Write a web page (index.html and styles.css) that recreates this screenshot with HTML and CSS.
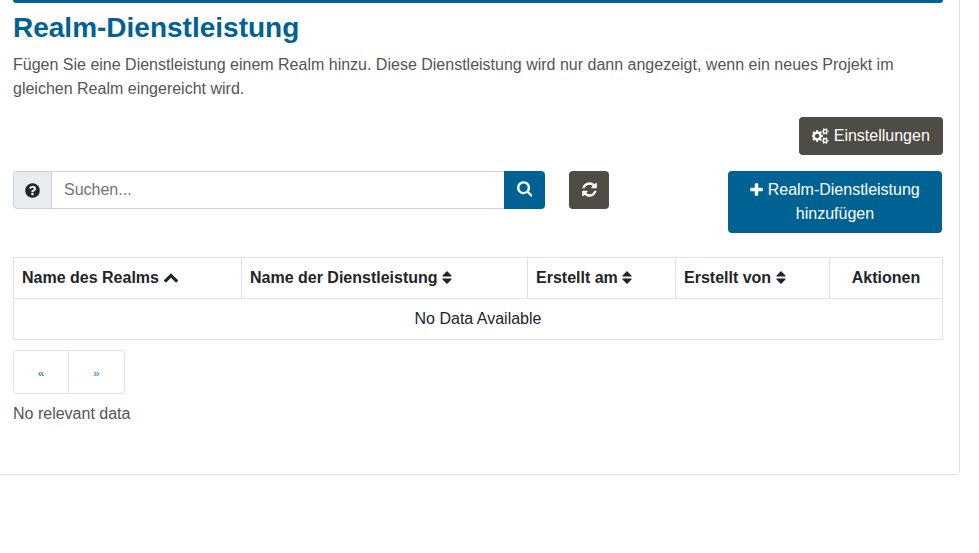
FILE: index.html
```html
<!DOCTYPE html>
<html lang="de">
<head>
<meta charset="utf-8">
<title>Realm-Dienstleistung</title>
<link rel="stylesheet" href="styles.css">
</head>
<body>
<main class="card">
  <div class="topbar"></div>
  <h1>Realm-Dienstleistung</h1>
  <p class="intro">Fügen Sie eine Dienstleistung einem Realm hinzu. Diese Dienstleistung wird nur dann angezeigt, wenn ein neues Projekt im gleichen Realm eingereicht wird.</p>
  <div class="settings">
    <button class="btn dark"><svg class="icon cogs" viewBox="0 0 1920 1792"><path d="M832 896q0-106-75-181t-181-75-181 75-75 181 75 181 181 75 181-75 75-181zm768 512q0-52-38-90t-90-38-90 38-38 90q0 53 37.500 90.500t90.500 37.500 90.500-37.500 37.500-90.500zm0-1024q0-52-38-90t-90-38-90 38-38 90q0 53 37.500 90.500t90.500 37.500 90.500-37.500 37.500-90.500zm-384 421v185q0 10-7 19.500t-16 10.500l-155 24q-11 35-32 76 34 48 90 115 7 11 7 20 0 12-7 19-23 30-82.500 89.500t-78.500 59.500q-11 0-21-7l-115-90q-37 19-77 31-11 108-23 155-7 24-30 24h-186q-11 0-20-7.500t-10-17.500l-23-153q-34-10-75-31l-118 89q-7 7-20 7-11 0-21-8-144-133-144-160 0-9 7-19 10-14 41-53t47-61q-23-44-35-82l-152-24q-10-1-17-9.500t-7-19.500v-185q0-10 7-19.500t16-10.500l155-24q11-35 32-76-34-48-90-115-7-11-7-20 0-12 7-20 22-30 82-89t79-59q11 0 21 7l115 90q34-18 77-32 11-108 23-154 7-24 30-24h186q11 0 20 7.500t10 17.500l23 153q34 10 75 31l118-89q8-7 20-7 11 0 21 8 144 133 144 160 0 8-7 19-12 16-42 54t-45 60q23 48 34 82l152 23q10 2 17 10.500t7 19.500zm640 533v140q0 16-149 31-12 27-30 52 51 113 51 138 0 4-4 7-122 71-124 71-8 0-46-47t-52-68q-20 2-30 2t-30-2q-14 21-52 68t-46 47q-2 0-124-71-4-3-4-7 0-25 51-138-18-25-30-52-149-15-149-31v-140q0-16 149-31 13-29 30-52-51-113-51-138 0-4 4-7 4-2 35-20t59-34 30-16q8 0 46 46.500t52 67.500q20-2 30-2t30 2q51-71 92-112l6-2q4 0 124 70 4 3 4 7 0 25-51 138 17 23 30 52 149 15 149 31zm0-1024v140q0 16-149 31-12 27-30 52 51 113 51 138 0 4-4 7-122 71-124 71-8 0-46-47t-52-68q-20 2-30 2t-30-2q-14 21-52 68t-46 47q-2 0-124-71-4-3-4-7 0-25 51-138-18-25-30-52-149-15-149-31v-140q0-16 149-31 13-29 30-52-51-113-51-138 0-4 4-7 4-2 35-20t59-34 30-16q8 0 46 46.500t52 67.500q20-2 30-2t30 2q51-71 92-112l6-2q4 0 124 70 4 3 4 7 0 25-51 138 17 23 30 52 149 15 149 31z"/></svg> Einstellungen</button>
  </div>
  <div class="toolbar">
    <div class="search">
      <span class="help"><svg class="icon round" viewBox="128 0 1536 1792"><path d="M1024 1376v-192q0-14-9-23t-23-9h-192q-14 0-23 9t-9 23v192q0 14 9 23t23 9h192q14 0 23-9t9-23zm256-672q0-88-55.500-163t-138.500-116-170-41q-243 0-371 213-15 24 8 42l132 100q7 6 19 6 16 0 25-12 53-68 86-92 34-24 86-24 48 0 85.500 26t37.500 59q0 38-20 61t-68 45q-63 28-115.500 86.500t-52.500 125.500v36q0 14 9 23t23 9h192q14 0 23-9t9-23q0-19 21.500-49.500t54.500-49.500q32-18 49-28.500t46-35 44.500-48 28-60.500 12.500-81zm384 192q0 209-103 385.500t-279.500 279.500-385.500 103-385.500-103-279.500-279.500-103-385.500 103-385.500 279.500-279.500 385.500-103 385.500 103 279.500 279.500 103 385.500z"/></svg></span>
      <input type="text" placeholder="Suchen..." aria-label="Suchen">
      <button class="btn primary find" aria-label="Suchen"><svg class="icon lens" viewBox="64 128 1664 1792"><path d="M1216 832q0-185-131.500-316.500t-316.500-131.500-316.500 131.500-131.500 316.500 131.500 316.500 316.500 131.500 316.500-131.500 131.500-316.500zm512 832q0 52-38 90t-90 38q-54 0-90-38l-343-342q-179 124-399 124-143 0-273.500-55.500t-225-150-150-225-55.500-273.500 55.500-273.500 150-225 225-150 273.500-55.500 273.500 55.500 225 150 150 225 55.500 273.500q0 220-124 399l343 343q37 37 37 90z"/></svg></button>
    </div>
    <button class="btn dark reload" aria-label="Aktualisieren"><svg class="icon round" viewBox="128 0 1536 1792"><path d="M1639 1056q0 5-1 7-64 268-268 434.500t-478 166.500q-146 0-282.500-55t-243.500-157l-129 129q-19 19-45 19t-45-19-19-45v-448q0-26 19-45t45-19h448q26 0 45 19t19 45-19 45l-137 137q71 66 161 102t187 36q134 0 250-65t186-179q11-17 53-117 8-23 30-23h192q13 0 22.500 9.500t9.500 22.500zm25-800v448q0 26-19 45t-45 19h-448q-26 0-45-19t-19-45 19-45l138-138q-148-137-349-137-134 0-250 65t-186 179q-11 17-53 117-8 23-30 23h-199q-13 0-22.500-9.500t-9.500-22.500v-7q65-268 270-434.500t480-166.500q146 0 284 55.500t245 156.500l130-129q19-19 45-19t45 19 19 45z"/></svg></button>
    <button class="btn primary add"><svg class="icon plus" viewBox="192 0 1408 1792"><path d="M1600 736v192q0 40-28 68t-68 28h-416v416q0 40-28 68t-68 28h-192q-40 0-68-28t-28-68v-416h-416q-40 0-68-28t-28-68v-192q0-40 28-68t68-28h416v-416q0-40 28-68t68-28h192q40 0 68 28t28 68v416h416q40 0 68 28t28 68z"/></svg> Realm-Dienstleistung hinzufügen</button>
  </div>
  <table>
    <colgroup><col class="c1"><col class="c2"><col class="c3"><col class="c4"><col class="c5"></colgroup>
    <thead><tr>
      <th>Name des Realms <svg class="icon chevron" viewBox="0 0 16 16"><path d="M8 3.300 15.300 10.500 13.100 12.700 8 7.700 2.900 12.700.7 10.500z"/></svg></th>
      <th>Name der Dienstleistung <svg class="icon sort" viewBox="0 0 9 16"><path d="M4.500 1 9 5.500V6.500H0V5.500zM0 8.500h9v1L4.500 14 0 9.500z"/></svg></th>
      <th>Erstellt am <svg class="icon sort" viewBox="0 0 9 16"><path d="M4.500 1 9 5.500V6.500H0V5.500zM0 8.500h9v1L4.500 14 0 9.500z"/></svg></th>
      <th>Erstellt von <svg class="icon sort" viewBox="0 0 9 16"><path d="M4.500 1 9 5.500V6.500H0V5.500zM0 8.500h9v1L4.500 14 0 9.500z"/></svg></th>
      <th class="center">Aktionen</th>
    </tr></thead>
    <tbody><tr><td colspan="5" class="center">No Data Available</td></tr></tbody>
  </table>
  <nav class="pager"><span class="prev">«</span><a>»</a></nav>
  <p class="status">No relevant data</p>
</main>
</body>
</html>
```
FILE: styles.css
```css
* { box-sizing: border-box; }
body {
  margin: 0;
  background: #fff;
  color: #555;
  font: 16px/24px "Liberation Sans", Arial, sans-serif;
  overflow: hidden;
}
.card {
  width: 960px;
  height: 475px;
  padding: 0 16px 0 13px;
  border: solid #dee2e6;
  border-width: 0 1px 1px 0;
  border-bottom-right-radius: 4px;
}
.topbar {
  height: 3px;
  background: #006293;
  border-radius: 0 0 4px 4px;
}
h1 {
  margin: 8px 0;
  color: #006293;
  font-size: 28px;
  line-height: 34px;
}
p { margin: 0; }
.icon { height: 16px; fill: currentColor; vertical-align: -3px; }
.cogs { width: 17.140px; }
.round { width: 13.710px; }
.help .round { width: 15px; height: 17px; }
.reload .round { width: 15px; height: 17px; }
.lens { width: 15.500px; height: 17px; }
.plus { width: 13px; }
.chevron { width: 16px; }
.sort { width: 10px; }
.btn {
  border: 0;
  border-radius: 4px;
  padding: 7px 13px;
  color: #fff;
  font: inherit;
}
.dark { background: #4f4b45; }
.primary { background: #006293; }
.settings { display: flex; justify-content: flex-end; margin: 16px 0; }
.settings .btn { width: 144px; padding: 7px 0; }
.toolbar { display: flex; align-items: flex-start; height: 62px; }
.search { display: flex; width: 532px; height: 38px; }
.help {
  display: flex;
  align-items: center;
  justify-content: center;
  width: 39px;
  background: #e9ecef;
  border: 1px solid #ced4da;
  border-radius: 4px 0 0 4px;
  color: #212529;
}
input {
  flex: 1;
  min-width: 0;
  padding: 6px 12px;
  border: solid #ced4da;
  border-width: 1px 0;
  font: inherit;
  outline: 0;
}
input::placeholder { color: #6c757d; opacity: 1; }
.find { width: 41px; padding: 0; border-radius: 0 4px 4px 0; }
.reload { width: 40px; height: 38px; margin-left: 24px; padding: 0; }
.add { width: 214px; margin: 0 1px 0 auto; }
table {
  width: 930px;
  margin-top: 24px;
  table-layout: fixed;
  border-collapse: collapse;
  color: #212529;
}
.c1 { width: 228px; }
.c2 { width: 286px; }
.c3 { width: 148px; }
.c4 { width: 154px; }
.c5 { width: 113px; }
th, td {
  height: 41px;
  padding: 8px;
  border: 1px solid #dee2e6;
  text-align: left;
  line-height: 24px;
  white-space: nowrap;
}
.center { text-align: center; }
.pager {
  display: flex;
  width: 112px;
  height: 44px;
  margin: 10px 0 8px;
  border: 1px solid #dee2e6;
  border-radius: 4px;
  font-size: 11.500px;
  line-height: 44px;
  text-align: center;
}
.pager a { flex: 1; color: #007bff; }
.prev { width: 55px; border-right: 1px solid #dee2e6; color: #006293; }
```
